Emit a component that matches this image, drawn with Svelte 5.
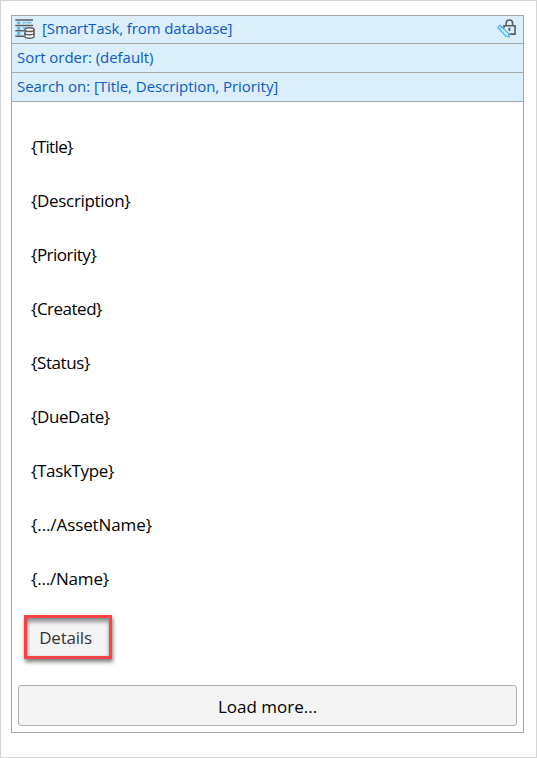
<script>
  const fields = [
    { text: '{Title}', spacing: -0.65 },
    { text: '{Description}', spacing: -0.32 },
    { text: '{Priority}', spacing: -0.5 },
    { text: '{Created}', spacing: -0.5 },
    { text: '{Status}', spacing: -0.4 },
    { text: '{DueDate}', spacing: -0.4 },
    { text: '{TaskType}', spacing: -0.35 },
    { text: '{.../AssetName}', spacing: -0.1 },
    { text: '{.../Name}', spacing: -0.2 }
  ];
</script>

<div class="page">
  <section class="list">
    <header class="bar source">
      <svg class="db" width="20" height="20" viewBox="0 0 20 20">
        <g fill="#5bc0f5">
          <rect x="2" y="2.6" width="3.4" height="2.4" />
          <rect x="7.5" y="2.8" width="3" height="1.6" />
          <rect x="11.5" y="2.8" width="5" height="1.6" />
          <rect x="2" y="7.8" width="3.4" height="3" />
          <rect x="7.5" y="8" width="3" height="1.6" />
          <rect x="2" y="13" width="3.4" height="3" />
        </g>
        <g stroke="#5c5c5c" stroke-width="1.5" fill="none">
          <path d="M.3 1.1H18M.3 6.4H18M.3 11.8H9M.3 17.2H9" />
          <path d="M10 10.5v7c0 2.3 9 2.3 9 0v-7" fill="#fff" />
          <ellipse cx="14.5" cy="10.7" rx="4.5" ry="1.9" fill="#fff" />
          <path d="M10 14c0 2.3 9 2.3 9 0" />
        </g>
      </svg>
      <span class="name">[SmartTask, from database]</span>
      <svg class="lock" width="21" height="20" viewBox="0 0 21 20">
        <g fill="none" stroke="#5c5c5c" stroke-width="1.6">
          <path d="M10.2 6.5V4.2a3.2 3.2 0 0 1 6.4 0V6.5" />
          <path d="M8 9V6.7H19v8.4H13.5" />
          <path d="M13.4 8.8v3.2" stroke-width="1.8" />
        </g>
        <path d="M1.6 8.4l2.4-2 8.4 8 .8 3.6-3.6-1z" fill="#d0ecfd" stroke="#45b1f2" stroke-width="1.2" />
        <path d="M3.6 10.2l2.4-2.2" stroke="#45b1f2" />
      </svg>
    </header>
    <div class="bar sort"><span>Sort order: (default)</span></div>
    <div class="bar search"><span>Search on: [Title, Description, Priority]</span></div>
    <div class="fields">
      {#each fields as field}
        <div class="field"><span style:letter-spacing="{field.spacing}px">{field.text}</span></div>
      {/each}
    </div>
    <button class="details">Details</button>
    <button class="more">Load more...</button>
  </section>
</div>

<style>
  .page {
    box-sizing: border-box;
    width: 537px;
    height: 758px;
    padding: 14px 12px 24px 10px;
    border: 1px solid #d5d5d5;
    background: #fff;
    font-family: 'Open Sans', 'Noto Sans', sans-serif;
    color: #000;
  }
  .list {
    box-sizing: border-box;
    display: flex;
    flex-direction: column;
    width: 513px;
    height: 718px;
    border: 1px solid #a5a7a9;
  }
  .bar {
    box-sizing: border-box;
    display: flex;
    align-items: center;
    height: 29px;
    padding: 0 5px 2px;
    border-bottom: 1px solid #a5a7a9;
    background: #daeefc;
    color: #0d5bc4;
    font-size: 15px;
    letter-spacing: -0.05px;
    white-space: nowrap;
  }
  .source { height: 28px; padding: 0 5px 2px 3px; }
  .name { margin-left: 7px; padding-bottom: 1px; letter-spacing: -0.12px; }
  .db { margin-top: 1px; }
  .lock { margin: 1px 1px 0 auto; }
  .fields { padding: 17px 0 1px 19px; }
  .field {
    display: flex;
    align-items: center;
    height: 54px;
    font-size: 17px;
    white-space: nowrap;
  }
  button {
    box-sizing: border-box;
    padding: 0;
    font-family: inherit;
    font-size: 17px;
    background: #f4f4f4;
  }
  .details {
    width: 88px;
    height: 44px;
    margin: 9px 0 0 12px;
    padding-right: 5px;
    border: 3px solid #fb4343;
    color: #333;
    letter-spacing: -0.2px;
    box-shadow: 1px 3px 4px rgba(0, 0, 0, .5), inset 0 4px 4px rgba(0, 0, 0, .4), inset 1px 0 2px rgba(0, 0, 0, .15);
  }
  .more {
    width: 499px;
    height: 41px;
    margin: 26px 0 0 6px;
    padding-top: 2px;
    border: 1px solid #b0b0b0;
    border-radius: 3px;
    color: #000;
  }
</style>
